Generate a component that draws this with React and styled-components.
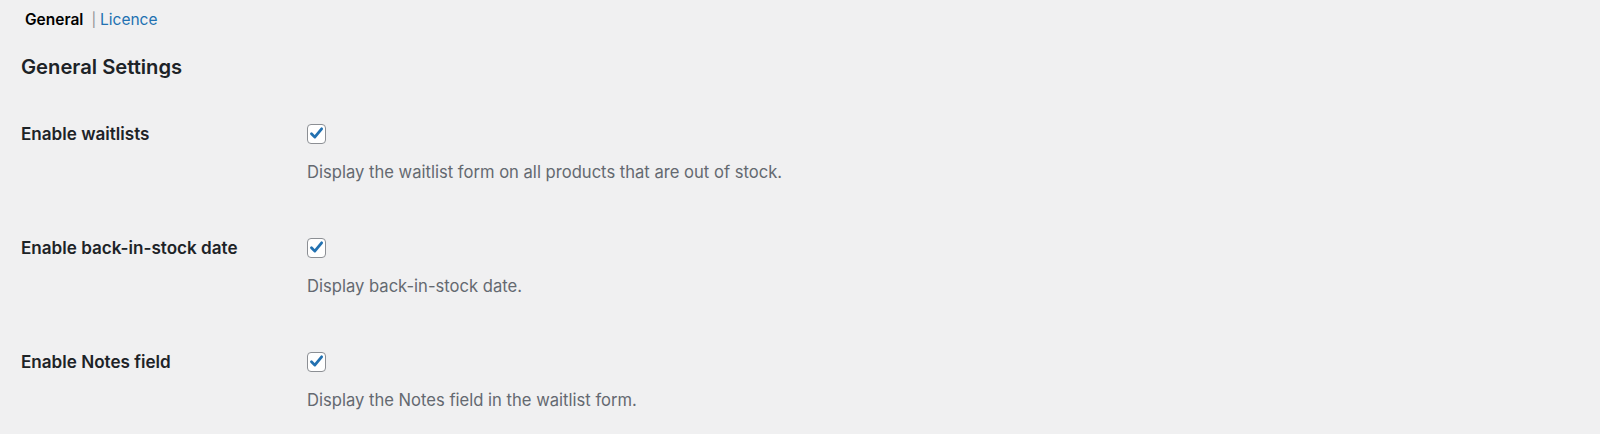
import React from "react";
import styled, { createGlobalStyle } from "styled-components";

const GlobalStyle = createGlobalStyle`
  html, body {
    margin: 0;
    padding: 0;
    background: #f0f0f1;
  }
  body {
    font-family: Inter, "Liberation Sans", sans-serif;
    color: #1d2327;
  }
`;

const Page = styled.div`
  padding: 9px 21px 0 21px;
`;

const Tabs = styled.ul`
  display: flex;
  align-items: center;
  list-style: none;
  margin: 0;
  padding: 0 0 0 4px;
  font-size: 15.5px;
  line-height: 22px;
`;

const Tab = styled.li`
  color: ${(p) => (p.$current ? "#000" : "#2271b1")};
  font-weight: ${(p) => (p.$current ? 600 : 400)};
`;

const Sep = styled.span`
  color: #8c8f94;
  font-size: 14px;
  margin: 0 4px 0 8px;
`;

const Heading = styled.h2`
  margin: 23px 0 0 0;
  font-size: 20.2px;
  line-height: 26px;
  font-weight: 600;
  color: #1d2327;
`;

const Table = styled.div`
  margin-top: 41.5px;
  display: flex;
  flex-direction: column;
  gap: 51.5px;
`;

const Row = styled.div`
  display: grid;
  grid-template-columns: 286px 1fr;
`;

const Label = styled.div`
  font-size: 17.1px;
  font-weight: 600;
  line-height: 24px;
`;

const Field = styled.div`
  display: flex;
  flex-direction: column;
  align-items: flex-start;
`;

const Box = styled.span`
  display: flex;
  align-items: center;
  justify-content: center;
  width: 17px;
  height: 18px;
  margin-top: 2px;
  border: 1px solid #8c8f94;
  border-radius: 4px;
  background: #fff;
  box-sizing: content-box;
`;

const Desc = styled.p`
  margin: 16.5px 0 0 0;
  font-size: 16.6px;
  line-height: 24px;
  color: #646970;
`;

const Check = () => (
  <svg width="15" height="15" viewBox="0 0 14 14">
    <path
      d="M2.3 7.2 L5.4 10.4 L11.8 2.6"
      fill="none"
      stroke="#2271b1"
      strokeWidth="2.6"
      strokeLinecap="round"
      strokeLinejoin="round"
    />
  </svg>
);

const settings = [
  { label: "Enable waitlists", desc: "Display the waitlist form on all products that are out of stock." },
  { label: "Enable back-in-stock date", desc: "Display back-in-stock date." },
  { label: "Enable Notes field", desc: "Display the Notes field in the waitlist form." },
];

export default function App() {
  return (
    <>
      <GlobalStyle />
      <Page>
        <Tabs>
          <Tab $current>General</Tab>
          <Sep>|</Sep>
          <Tab>Licence</Tab>
        </Tabs>
        <Heading>General Settings</Heading>
        <Table>
          {settings.map((s) => (
            <Row key={s.label}>
              <Label>{s.label}</Label>
              <Field>
                <Box>
                  <Check />
                </Box>
                <Desc>{s.desc}</Desc>
              </Field>
            </Row>
          ))}
        </Table>
      </Page>
    </>
  );
}
